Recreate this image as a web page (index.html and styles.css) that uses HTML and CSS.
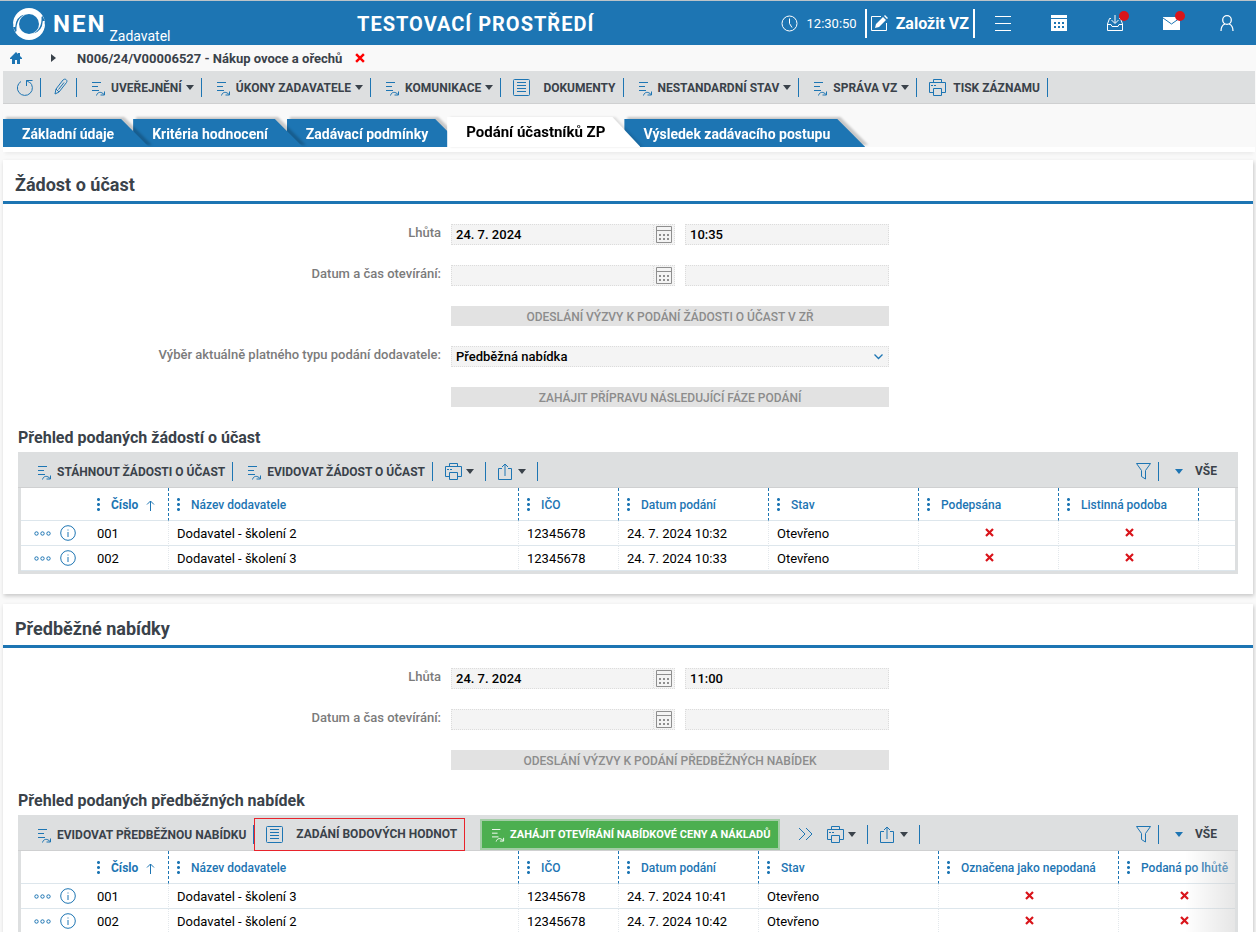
FILE: index.html
```html
<!DOCTYPE html>
<html lang="cs">
<head>
  <meta charset="utf-8">
  <title>NEN - Zadavatel</title>
  <link rel="stylesheet" href="styles.css">
</head>
<body>
  <svg class="sprite" aria-hidden="true">
    <symbol id="i-action" viewBox="0 0 14 14"><path d="M0 .5h9M0 4.500h6M0 8.500h7M4.500 13.500c1-4 5-4 7.500-1M12.500 9.500v3.500h-4"/></symbol>
    <symbol id="i-refresh" viewBox="0 0 18 18"><path d="M5 2.500A7.500 7.500 0 1 0 13.500 3M10.500 7V1.500H16.500M10.500 1.500l3 2"/></symbol>
    <symbol id="i-pen" viewBox="0 0 14 18"><path d="M1 16l1-5L9 2c2-2 5 0 3.500 2.500L5 14zM2 11l3 3M4.500 11.500L10 4.500"/></symbol>
    <symbol id="i-doc" viewBox="0 0 17 17"><rect x=".5" y=".5" width="16" height="16" rx="1"/><path d="M4 3.500h9M4 6.500h9M4 9.500h9M4 12.500h9"/></symbol>
    <symbol id="i-print" viewBox="0 0 17 17"><path d="M4.500 3.500V.5h8v3M4.500 13.500h-4v-10h16v10h-4M4.500 9.500h8v7h-8zM2 6.500h2M5 6.500h2"/></symbol>
    <symbol id="i-share" viewBox="0 0 15 17"><path d="M4 5.500H.5v11h13v-11H10M7 13V1M4 4l3-3 3 3"/></symbol>
    <symbol id="i-filter" viewBox="0 0 15 17"><path d="M.5.500h14l-5 7v8.500l-4-2.500V7.500z"/></symbol>
    <symbol id="i-more" viewBox="0 0 15 12"><path d="M1 0l6 6-6 6M8 0l6 6-6 6"/></symbol>
    <symbol id="i-cal" viewBox="0 0 16 17"><path d="M.5.500h15v16H.5zM.5 4.500h15"/><path stroke-width="2" stroke-dasharray="2 2" d="M3 9h10M3 13h10"/></symbol>
    <symbol id="i-cross" viewBox="0 0 9 9"><path stroke-width="2.200" d="M1 1l7 7M8 1L1 8"/></symbol>
    <symbol id="i-dots" viewBox="0 0 17 5"><circle cx="2.500" cy="2.500" r="1.700"/><circle cx="8.500" cy="2.500" r="1.700"/><circle cx="14.500" cy="2.500" r="1.700"/></symbol>
    <symbol id="i-info" viewBox="0 0 16 16"><circle cx="8" cy="8" r="7.300"/><path d="M8 7v5M8 4.500v1"/></symbol>
    <symbol id="i-arrow" viewBox="0 0 9 11"><path d="M4.500 11V1M1 4.500L4.500 1 8 4.500"/></symbol>
  </svg>

  <header class="header">
    <a class="brand" href="#">
      <svg class="logo" viewBox="0 0 32 32"><circle cx="16" cy="16" r="16" fill="#fff"/><circle cx="16" cy="16" r="10" fill="#1d75b3"/><path fill="#1d75b3" d="M0 19C1 11 6 7 12 6.500 6 9 3 15 3.500 23l-1 1zM32 13c-1 8-6 12-12 12.500 6-2.500 9-8.500 8.500-16.500l1-1z"/><path fill="none" stroke="#fff" stroke-width="2" d="M1.200 19C1.500 11 5 7 12 5M30.800 13c-.3 8-3.800 12-10.800 14"/></svg>
      <span class="brand-name">NEN</span>
      <span class="brand-role">Zadavatel</span>
    </a>
    <div class="env">TESTOVACÍ PROSTŘEDÍ</div>
    <div class="header-right">
      <svg class="icon clock" width="17" height="17" viewBox="0 0 17 17"><circle cx="8.500" cy="8.500" r="7.500"/><path d="M8.500 3.500v5l2.500 4"/></svg>
      <span class="time">12:30:50</span>
      <button class="create">
        <svg class="icon" width="17" height="17" viewBox="0 0 17 17"><path d="M10 1.500H.5v14h15V8"/><path fill="#fff" stroke="none" d="M4 13l1-4 7-7 3 3-7 7zM13 1l1-1 3 3-1 1z"/></svg>
        Založit VZ
      </button>
      <nav class="header-icons">
        <button aria-label="Menu"><svg class="icon" width="16" height="16" viewBox="0 0 16 16"><path d="M0 1.500h16M0 8.500h16M0 15.500h16"/></svg></button>
        <button aria-label="Kalendář"><svg class="icon" width="16" height="16" viewBox="0 0 16 16"><path fill="#fff" stroke="none" d="M0 0h16v3H0zM0 4h16v12H0z"/><path stroke="#1d75b3" stroke-width="2" stroke-dasharray="2 2" d="M3 8h10M3 12h10"/></svg></button>
        <button aria-label="Doručené"><svg class="icon" width="16" height="16" viewBox="0 0 16 16"><path d="M4 3.500H2.500L.5 9v6.500h15V9l-2-5.500H12M.5 9.500H4l1 2h6l1-2h3.500M8 0v8M4.500 5L8 8.500 11.500 5"/></svg><span class="badge"></span></button>
        <button aria-label="Zprávy"><svg class="icon" width="17" height="16" viewBox="0 0 17 16"><path fill="#fff" stroke="none" d="M0 2h17v13H0z"/><path stroke="#1d75b3" d="M0 3l8.500 6L17 3"/></svg><span class="badge"></span></button>
        <button aria-label="Uživatel"><svg class="icon user" width="14" height="16" viewBox="0 0 14 16"><circle cx="7" cy="5" r="4.300"/><path d="M1 16c0-4 1-6 4-7M13 16c0-4-1-6-4-7"/></svg></button>
      </nav>
    </div>
  </header>

  <nav class="breadcrumb">
    <a href="#" aria-label="Domů"><svg class="home" width="12" height="12" viewBox="0 0 12 12"><path d="M6 0L0 6v1h2v5h3V8h2v4h3V7h2V6l-2-2V1H8v1z"/></svg></a>
    <span class="crumb-arrow"></span>
    <span class="crumb">N006/24/V00006527 - Nákup ovoce a ořechů</span>
    <button class="crumb-close" aria-label="Zavřít"><svg class="icon" width="10" height="10"><use href="#i-cross"/></svg></button>
  </nav>

  <div class="toolbar main-toolbar">
    <button class="tool icon-only" aria-label="Obnovit"><svg class="icon" width="18" height="18"><use href="#i-refresh"/></svg></button>
    <button class="tool icon-pen" aria-label="Upravit"><svg class="icon" width="14" height="18"><use href="#i-pen"/></svg></button>
    <button class="tool"><svg class="icon action" width="14" height="14"><use href="#i-action"/></svg>UVEŘEJNĚNÍ<i class="caret"></i></button>
    <button class="tool"><svg class="icon action" width="14" height="14"><use href="#i-action"/></svg>ÚKONY ZADAVATELE<i class="caret"></i></button>
    <button class="tool"><svg class="icon action" width="14" height="14"><use href="#i-action"/></svg>KOMUNIKACE<i class="caret"></i></button>
    <button class="tool wide"><svg class="icon" width="17" height="17"><use href="#i-doc"/></svg>DOKUMENTY</button>
    <button class="tool"><svg class="icon action" width="14" height="14"><use href="#i-action"/></svg>NESTANDARDNÍ STAV<i class="caret"></i></button>
    <button class="tool"><svg class="icon action" width="14" height="14"><use href="#i-action"/></svg>SPRÁVA VZ<i class="caret"></i></button>
    <button class="tool print"><svg class="icon" width="17" height="17"><use href="#i-print"/></svg>TISK ZÁZNAMU</button>
  </div>

  <nav class="tabs">
    <a class="tab t1" href="#"><span>Základní údaje</span></a>
    <a class="tab t2" href="#"><span>Kritéria hodnocení</span></a>
    <a class="tab t3" href="#"><span>Zadávací podmínky</span></a>
    <a class="tab active" href="#"><span>Podání účastníků ZP</span></a>
    <a class="tab" href="#"><span>Výsledek zadávacího postupu</span></a>
  </nav>

  <main>
    <section class="panel">
      <h2>Žádost o účast</h2>
      <form class="form">
        <label for="date1">Lhůta</label>
        <div class="fields">
          <div class="field date"><input type="text" id="date1" value="24. 7. 2024" readonly><button type="button" aria-label="Kalendář"><svg class="icon" width="16" height="17"><use href="#i-cal"/></svg></button></div>
          <div class="field"><input type="text" value="10:35" aria-label="Čas lhůty" readonly></div>
        </div>
        <label for="open1">Datum a čas otevírání:</label>
        <div class="fields">
          <div class="field date"><input type="text" id="open1" readonly><button type="button" aria-label="Kalendář"><svg class="icon" width="16" height="17"><use href="#i-cal"/></svg></button></div>
          <div class="field"><input type="text" aria-label="Čas otevírání" readonly></div>
        </div>
        <button class="submit" type="button" disabled>ODESLÁNÍ VÝZVY K PODÁNÍ ŽÁDOSTI O ÚČAST V ZŘ</button>
        <label for="type">Výběr aktuálně platného typu podání dodavatele:</label>
        <div class="field select">
          <select id="type"><option>Předběžná nabídka</option></select>
          <svg class="icon" width="9" height="6" viewBox="0 0 9 6"><path stroke-width="1.300" d="M.5.500l4 4 4-4"/></svg>
        </div>
        <button class="submit" type="button" disabled>ZAHÁJIT PŘÍPRAVU NÁSLEDUJÍCÍ FÁZE PODÁNÍ</button>
      </form>

      <h3>Přehled podaných žádostí o účast</h3>
      <div class="grid">
        <div class="toolbar">
          <button class="tool"><svg class="icon action" width="14" height="14"><use href="#i-action"/></svg>STÁHNOUT ŽÁDOSTI O ÚČAST</button>
          <button class="tool"><svg class="icon action" width="14" height="14"><use href="#i-action"/></svg>EVIDOVAT ŽÁDOST O ÚČAST</button>
          <button class="tool menu" aria-label="Tisk"><svg class="icon" width="17" height="17"><use href="#i-print"/></svg><i class="caret"></i></button>
          <button class="tool menu" aria-label="Export"><svg class="icon" width="15" height="17"><use href="#i-share"/></svg><i class="caret share-caret"></i></button>
          <button class="tool filter" aria-label="Filtr"><svg class="icon" width="15" height="17"><use href="#i-filter"/></svg></button>
          <button class="view"><i class="caret"></i>VŠE</button>
        </div>
        <div class="table-wrap">
          <table>
            <colgroup><col class="c-act"><col class="c-num"><col class="c-name"><col class="c-ico"><col class="c-150"><col class="c-150"><col class="c-140"><col class="c-140"><col></colgroup>
            <thead>
              <tr><th class="plain"></th><th class="sorted"><i class="grip"></i>Číslo<svg class="icon" width="9" height="11"><use href="#i-arrow"/></svg></th><th><i class="grip"></i>Název dodavatele</th><th><i class="grip"></i>IČO</th><th><i class="grip"></i>Datum podání</th><th><i class="grip"></i>Stav</th><th><i class="grip"></i>Podepsána</th><th><i class="grip"></i>Listinná podoba</th><th class="plain"></th></tr>
            </thead>
            <tbody>
              <tr><td class="actions"><svg class="icon" width="17" height="5"><use href="#i-dots"/></svg><svg class="icon" width="16" height="16"><use href="#i-info"/></svg></td><td>001</td><td>Dodavatel - školení 2</td><td>12345678</td><td>24. 7. 2024 10:32</td><td>Otevřeno</td><td class="no"><svg class="icon" width="9" height="9"><use href="#i-cross"/></svg></td><td class="no"><svg class="icon" width="9" height="9"><use href="#i-cross"/></svg></td><td class="plain"></td></tr>
              <tr><td class="actions"><svg class="icon" width="17" height="5"><use href="#i-dots"/></svg><svg class="icon" width="16" height="16"><use href="#i-info"/></svg></td><td>002</td><td>Dodavatel - školení 3</td><td>12345678</td><td>24. 7. 2024 10:33</td><td>Otevřeno</td><td class="no"><svg class="icon" width="9" height="9"><use href="#i-cross"/></svg></td><td class="no"><svg class="icon" width="9" height="9"><use href="#i-cross"/></svg></td><td class="plain"></td></tr>
            </tbody>
          </table>
        </div>
      </div>
    </section>

    <section class="panel">
      <h2>Předběžné nabídky</h2>
      <form class="form">
        <label for="date2">Lhůta</label>
        <div class="fields">
          <div class="field date"><input type="text" id="date2" value="24. 7. 2024" readonly><button type="button" aria-label="Kalendář"><svg class="icon" width="16" height="17"><use href="#i-cal"/></svg></button></div>
          <div class="field"><input type="text" value="11:00" aria-label="Čas lhůty" readonly></div>
        </div>
        <label for="open2">Datum a čas otevírání:</label>
        <div class="fields">
          <div class="field date"><input type="text" id="open2" readonly><button type="button" aria-label="Kalendář"><svg class="icon" width="16" height="17"><use href="#i-cal"/></svg></button></div>
          <div class="field"><input type="text" aria-label="Čas otevírání" readonly></div>
        </div>
        <button class="submit" type="button" disabled>ODESLÁNÍ VÝZVY K PODÁNÍ PŘEDBĚŽNÝCH NABÍDEK</button>
      </form>

      <h3>Přehled podaných předběžných nabídek</h3>
      <div class="grid">
        <div class="toolbar">
          <button class="tool"><svg class="icon action" width="14" height="14"><use href="#i-action"/></svg>EVIDOVAT PŘEDBĚŽNOU NABÍDKU</button>
          <button class="tool-marked"><svg class="icon" width="17" height="17"><use href="#i-doc"/></svg>ZADÁNÍ BODOVÝCH HODNOT</button>
          <button class="tool-green"><svg class="icon action" width="13" height="13"><use href="#i-action"/></svg>ZAHÁJIT OTEVÍRÁNÍ NABÍDKOVÉ CENY A NÁKLADŮ</button>
          <button class="more" aria-label="Další"><svg class="icon" width="15" height="12"><use href="#i-more"/></svg></button>
          <button class="tool menu" aria-label="Tisk"><svg class="icon" width="17" height="17"><use href="#i-print"/></svg><i class="caret"></i></button>
          <button class="tool menu" aria-label="Export"><svg class="icon" width="15" height="17"><use href="#i-share"/></svg><i class="caret share-caret"></i></button>
          <button class="tool filter" aria-label="Filtr"><svg class="icon" width="15" height="17"><use href="#i-filter"/></svg></button>
          <button class="view"><i class="caret"></i>VŠE</button>
        </div>
        <div class="table-wrap faded">
          <table class="offers">
            <colgroup><col class="c-act"><col class="c-num"><col class="c-name"><col class="c-ico"><col class="c-140"><col class="c-180"><col class="c-180"><col class="c-130"></colgroup>
            <thead>
              <tr><th class="plain"></th><th class="sorted"><i class="grip"></i>Číslo<svg class="icon" width="9" height="11"><use href="#i-arrow"/></svg></th><th><i class="grip"></i>Název dodavatele</th><th><i class="grip"></i>IČO</th><th><i class="grip"></i>Datum podání</th><th><i class="grip"></i>Stav</th><th><i class="grip"></i>Označena jako nepodaná</th><th><i class="grip"></i>Podaná po lhůtě</th></tr>
            </thead>
            <tbody>
              <tr><td class="actions"><svg class="icon" width="17" height="5"><use href="#i-dots"/></svg><svg class="icon" width="16" height="16"><use href="#i-info"/></svg></td><td>001</td><td>Dodavatel - školení 3</td><td>12345678</td><td>24. 7. 2024 10:41</td><td>Otevřeno</td><td class="no"><svg class="icon" width="9" height="9"><use href="#i-cross"/></svg></td><td class="no"><svg class="icon" width="9" height="9"><use href="#i-cross"/></svg></td></tr>
              <tr><td class="actions"><svg class="icon" width="17" height="5"><use href="#i-dots"/></svg><svg class="icon" width="16" height="16"><use href="#i-info"/></svg></td><td>002</td><td>Dodavatel - školení 2</td><td>12345678</td><td>24. 7. 2024 10:42</td><td>Otevřeno</td><td class="no"><svg class="icon" width="9" height="9"><use href="#i-cross"/></svg></td><td class="no"><svg class="icon" width="9" height="9"><use href="#i-cross"/></svg></td></tr>
            </tbody>
          </table>
        </div>
      </div>
    </section>
  </main>
</body>
</html>
```
FILE: styles.css
```css
:root {
  --blue: #1d75b3;
  --grey: #dddfe0;
  --text: #3a424a;
}
* {
  box-sizing: border-box;
}
body {
  margin: 0;
  height: 100vh;
  overflow: hidden;
  background: #f9f9f9;
  color: var(--text);
  font-family: Roboto, "Liberation Sans", sans-serif;
  font-size: 13px;
}
button, input, select {
  font: inherit;
  color: inherit;
  border: none;
  background: none;
  padding: 0;
  margin: 0;
}
a {
  color: inherit;
  text-decoration: none;
}
.sprite {
  display: none;
}
.icon {
  flex: none;
  fill: none;
  stroke: var(--blue);
}

/* header */
.header {
  display: flex;
  align-items: center;
  height: 45px;
  padding: 0 1px 0 13px;
  border-top: 1px solid #bcc3c8;
  background: var(--blue);
  color: #fff;
}
.header .icon {
  stroke: #fff;
}
.header .user {
  stroke-width: 1.3;
}
.brand {
  display: flex;
  align-items: center;
  width: 344px;
  padding-top: 1px;
}
.logo {
  width: 32px;
  height: 32px;
}
.brand-name {
  margin-left: 8px;
  font-size: 24px;
  font-weight: 700;
  letter-spacing: 2px;
}
.brand-role {
  align-self: flex-end;
  margin-left: 3px;
  font-size: 14px;
  line-height: 7px;
}
.env {
  padding-top: 2px;
  font-size: 20px;
  font-weight: 700;
  letter-spacing: 1px;
}
.header-right {
  display: flex;
  align-items: center;
  margin-left: auto;
}
.time {
  margin: 0 8px 0 9px;
}
.create {
  display: flex;
  align-items: center;
  gap: 8px;
  height: 29px;
  padding: 0 4px;
  border-left: 2px solid #fff;
  border-right: 2px solid #fff;
  font-size: 16px;
  font-weight: 700;
}
.header-icons {
  display: flex;
}
.header-icons button {
  position: relative;
  display: flex;
  align-items: center;
  justify-content: center;
  width: 56px;
  height: 32px;
}
.badge {
  position: absolute;
  top: 4px;
  right: 14px;
  width: 10px;
  height: 10px;
  border-radius: 50%;
  background: #d9141a;
}

/* breadcrumb */
.breadcrumb {
  display: flex;
  align-items: center;
  height: 26px;
  padding-left: 10px;
  font-weight: 700;
}
.home {
  display: block;
  fill: var(--blue);
}
.crumb-arrow {
  margin: 0 21px 0 29px;
  border-left: 5px solid var(--text);
  border-top: 4px solid transparent;
  border-bottom: 4px solid transparent;
}
.crumb-close {
  display: flex;
  margin-left: 13px;
}
.crumb-close .icon {
  stroke: #f00;
}

/* toolbars */
.toolbar {
  display: flex;
  align-items: center;
  height: 36px;
  background: var(--grey);
  border-bottom: 1px solid #cfd0d1;
  font-size: 12px;
  font-weight: 700;
}
.main-toolbar {
  height: 33px;
  margin: 0 1px 0 3px;
}
.tool {
  display: flex;
  align-items: center;
  flex: none;
  height: 19px;
  padding: 1px 7px 0 15px;
  border-right: 1px solid var(--blue);
  white-space: nowrap;
}
.action {
  margin: 3px 5px 0 0;
}
.caret {
  margin-left: 4px;
  border-top: 5px solid var(--text);
  border-left: 4px solid transparent;
  border-right: 4px solid transparent;
}
.icon-only {
  padding-left: 13px;
  padding-right: 6px;
}
.icon-pen {
  padding: 0 8px 0 13px;
}
.wide {
  gap: 13px;
  padding-left: 12px;
}
.print {
  gap: 7px;
  padding-left: 12px;
}
.menu {
  padding: 0 11px 0 12px;
}
.share-caret {
  margin-left: 5px;
}
.filter {
  margin-left: auto;
}
.view {
  display: flex;
  align-items: center;
  gap: 12px;
  margin-left: 12px;
}
.view .caret {
  border-top-color: var(--blue);
}
.tool-marked {
  display: flex;
  align-items: center;
  gap: 13px;
  height: 33px;
  padding: 0 7px 0 11px;
  border: 1px solid #e8232b;
}
.tool-green {
  display: flex;
  align-items: center;
  height: 31px;
  margin-left: 15px;
  padding: 0 7px 0 10px;
  border: 2px solid #a3cda6;
  background: #4caf50;
  color: #fff;
  font-size: 11px;
}
.tool-green .icon {
  stroke: #fff;
}
.more {
  display: flex;
  margin: 0 2px 0 18px;
}

/* tabs */
.tabs {
  display: flex;
  align-items: flex-end;
  height: 48px;
  margin: 0 1px 8px 3px;
  padding-bottom: 5px;
  background: linear-gradient(#fff, #fff) bottom / 100% 5px no-repeat;
  box-shadow: 0 4px 3px -2px #ececec;
}
.tab {
  position: relative;
  padding: 0 19px;
  height: 28px;
  line-height: 31px;
  color: #fff;
  font-size: 14px;
  font-weight: 700;
  filter: drop-shadow(3px -2px 1px rgba(0, 0, 0, 0.2));
}
.tab::before {
  content: "";
  position: absolute;
  inset: 0 -16px 0 0;
  background: var(--blue);
  clip-path: polygon(0 0, calc(100% - 28px) 0, 100% 100%, 0 100%);
}
.tab span {
  position: relative;
}
.t1 {
  z-index: 3;
}
.t2 {
  z-index: 2;
}
.t3 {
  z-index: 1;
}
.tab.active {
  z-index: 4;
  height: 30px;
  color: #000;
  font-size: 15px;
  filter: drop-shadow(3px 0 1px rgba(0, 0, 0, 0.1));
}
.tab.active::before {
  background: #fff;
}

/* panels */
.panel {
  margin: 0 3px 10px;
  padding-bottom: 20px;
  background: #fff;
  box-shadow: 1px 2px 4px rgba(0, 0, 0, 0.2);
}
h2 {
  margin: 0;
  height: 44px;
  padding: 4px 12px 0;
  border-bottom: 3px solid var(--blue);
  font-size: 18px;
  font-weight: 700;
  line-height: 41px;
}
h3 {
  margin: 0 15px;
  padding-top: 20px;
  height: 45px;
  font-size: 16px;
  font-weight: 700;
  line-height: 22px;
}
.form {
  display: grid;
  grid-template-columns: 438px minmax(0, 438px);
  column-gap: 10px;
  row-gap: 20px;
  padding-top: 20px;
}
.form label {
  text-align: right;
  line-height: 18px;
  color: #7b7b7b;
  font-weight: 500;
}
.fields {
  display: flex;
  gap: 10px;
}
.field {
  display: flex;
  flex: 1;
  height: 21px;
  border: 1px dotted #dcdcdc;
  background: #f4f4f4;
  color: #000;
  font-weight: 500;
}
.field input, .field select {
  flex: 1;
  min-width: 0;
  padding: 0 4px;
  appearance: none;
}
.date {
  flex: none;
  width: 224px;
}
.date button {
  display: flex;
  align-items: center;
  justify-content: center;
  width: 21px;
  padding-right: 1px;
  border-left: 1px dotted #dcdcdc;
}
.date .icon {
  stroke: #8f8f8f;
}
.select {
  align-items: center;
  padding-right: 5px;
}
.submit {
  grid-column: 2;
  height: 20px;
  padding-top: 1px;
  background: #e2e2e2;
  color: #8c8c8c;
  font-size: 12px;
  font-weight: 500;
}

/* data grid */
.grid {
  margin: 0 15px;
  border: solid var(--grey);
  border-width: 0 3px 3px;
}
.grid .toolbar {
  margin: 0 -3px;
  padding: 3px 21px 0 5px;
}
.table-wrap {
  position: relative;
  overflow: hidden;
  background: #fff;
}
.faded::after {
  content: "";
  position: absolute;
  inset: 0 0 0 auto;
  width: 50px;
  background: linear-gradient(to right, rgba(205, 205, 205, 0), rgba(205, 205, 205, 0.5));
}
table {
  width: 100%;
  table-layout: fixed;
  border-collapse: separate;
  border-spacing: 0;
}
.offers {
  width: 1228px;
}
.c-act {
  width: 68px;
}
.c-num {
  width: 80px;
}
.c-name {
  width: 350px;
}
.c-ico {
  width: 100px;
}
.c-130 {
  width: 130px;
}
.c-140 {
  width: 140px;
}
.c-150 {
  width: 150px;
}
.c-180 {
  width: 180px;
}
th, td {
  padding: 0 8px;
  text-align: left;
  white-space: nowrap;
  border-bottom: 1px solid #dde6ec;
}
th {
  height: 33px;
  border-right: 1px dashed var(--blue);
  color: var(--blue);
  font-size: 12px;
  font-weight: 500;
}
td {
  height: 25px;
  border-right: 1px dotted #e3e8ec;
  color: #000;
}
th.plain, td.plain, td.actions {
  border-right: none;
}
.sorted {
  font-weight: 700;
}
.sorted .icon {
  margin-left: 8px;
  vertical-align: -2px;
}
.grip {
  display: inline-block;
  width: 3px;
  height: 15px;
  margin-right: 11px;
  vertical-align: -3px;
  background: radial-gradient(circle, var(--blue) 1px, transparent 2px) 0 0 / 3px 5px;
}
.actions {
  padding: 0 0 0 13px;
}
.actions .icon {
  vertical-align: middle;
}
.actions .icon + .icon {
  margin-left: 9px;
}
td.no {
  padding: 0 0 2px 2px;
  text-align: center;
}
.no .icon {
  stroke: #d9141a;
}
```
